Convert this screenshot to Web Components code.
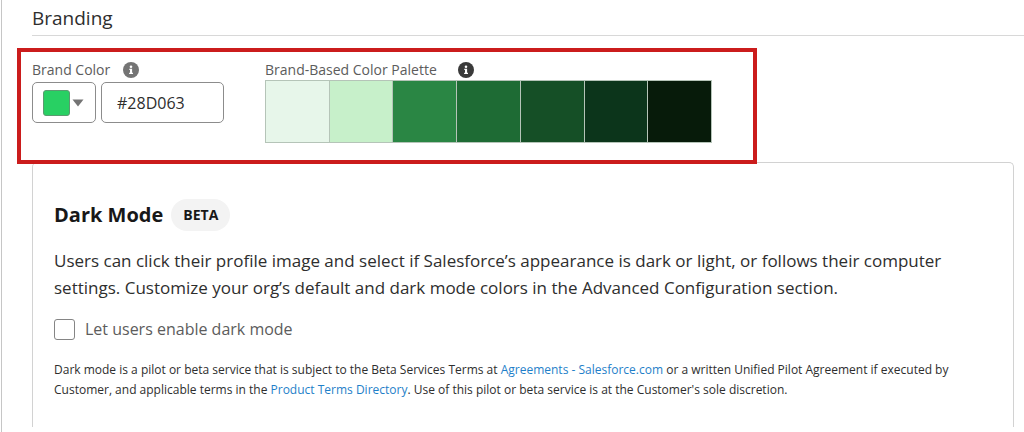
<!DOCTYPE html>
<html lang="en">
<head>
<meta charset="utf-8">
<meta name="viewport" content="width=device-width, initial-scale=1">
<title>Branding</title>
<style>
  body { margin: 0; background: #fff; color: #2e2e2e; font-family: "Open Sans", "Noto Sans", sans-serif; }
</style>
</head>
<body>
<settings-page></settings-page>

<template id="settings-page">
  <style>
    :host { display: block; box-sizing: border-box; min-height: 100vh; margin-left: 1px; border-left: 1px solid #c6c6c6; padding: 0 0 5px 30px; }
    h1 { margin: 0; padding: 5px 0 3px; border-bottom: 1px solid #d8d8d8; font-size: 19px; line-height: 27px; font-weight: 400; }
    highlight-box { margin: 12px 0 -2px -15px; }
    dark-mode-card { margin-right: 10px; }
  </style>
  <h1>Branding</h1>
  <highlight-box>
    <brand-color></brand-color>
    <color-palette colors="#e7f6ea #c7f0ca #2a8644 #1e6b34 #154f26 #0c351b #071b0a"></color-palette>
  </highlight-box>
  <dark-mode-card></dark-mode-card>
</template>

<template id="highlight-box">
  <style>
    :host { display: flex; align-items: flex-start; gap: 41px; position: relative; z-index: 1; box-sizing: border-box; width: fit-content; border: 4px solid #cb1c1c; padding: 8px 41px 17px 11px; }
  </style>
  <slot></slot>
</template>

<template id="info-icon">
  <style>
    :host { display: block; width: 16px; height: 16px; color: #747474; }
    svg { display: block; }
  </style>
  <svg width="16" height="16" viewBox="0 0 16 16" aria-hidden="true">
    <circle cx="8" cy="8" r="8" fill="currentColor"/>
    <circle cx="8" cy="4.7" r="1.3" fill="#fff"/>
    <path d="M6.3 6.8h2.8v3.9h.9v1.2H6.1v-1.2H7V8h-.7z" fill="#fff"/>
  </svg>
</template>

<template id="brand-color">
  <style>
    :host { display: block; }
    .head { display: flex; align-items: center; gap: 13px; height: 20px; }
    label { font-size: 14px; line-height: 20px; color: #5c5c5c; }
    .controls { display: flex; gap: 5px; margin-top: 2px; }
    button, input { box-sizing: border-box; height: 41px; border: 1px solid #8c8c8c; border-radius: 5px; background: #fff; }
    button { display: flex; align-items: center; gap: 2px; width: 64px; padding: 0 10px; }
    .chip { box-sizing: border-box; width: 27px; height: 26px; border: 1px solid #5b9a70; border-radius: 3px; background: #28d063; }
    input { width: 123px; padding: 0 15px; font: 16px "Open Sans", "Noto Sans", sans-serif; color: #2e2e2e; }
  </style>
  <div class="head"><label for="hex">Brand Color</label><info-icon></info-icon></div>
  <div class="controls">
    <button type="button" aria-label="Choose brand color">
      <span class="chip"></span>
      <svg width="12" height="8" viewBox="0 0 12 8" aria-hidden="true"><path d="M.5.5h11L6 7.5z" fill="#747474"/></svg>
    </button>
    <input id="hex" type="text" value="#28D063">
  </div>
</template>

<template id="color-palette">
  <style>
    :host { display: block; }
    .head { display: flex; align-items: center; gap: 21px; height: 20px; font-size: 14px; line-height: 20px; color: #5c5c5c; }
    info-icon { color: #3a3a3a; }
    .swatches { display: flex; box-sizing: border-box; width: 447px; border: 1px solid #b5c4b8; }
    .swatches span { flex: 1; height: 61px; }
    .swatches span + span { border-left: 1px solid #b5c4b8; }
  </style>
  <div class="head"><span>Brand-Based Color Palette</span><info-icon></info-icon></div>
  <div class="swatches"></div>
</template>

<template id="dark-mode-card">
  <style>
    :host { display: block; border: 1px solid #d2d2d2; border-bottom: 0; border-radius: 5px 5px 0 0; padding: 36px 50px 27px 21px; }
    header { display: flex; align-items: center; gap: 8px; }
    h2 { margin: 0; font-size: 20px; line-height: 32px; font-weight: 700; color: #181818; }
    .badge { border-radius: 16px; padding: 0 12px; background: #f3f3f3; font-size: 14px; line-height: 32px; font-weight: 700; color: #181818; }
    p { margin: 0; }
    .intro { margin-top: 16px; font-size: 17px; line-height: 27px; }
    .option { display: flex; align-items: center; gap: 10px; margin-top: 16px; }
    .option label { font-size: 16px; line-height: 24px; color: #5c5c5c; }
    input { appearance: none; box-sizing: border-box; width: 21px; height: 21px; margin: 0; border: 1px solid #858585; border-radius: 3px; background: #fff; }
    .legal { margin-top: 19px; font-size: 12px; line-height: 20px; }
    a { color: #1f7fc9; text-decoration: none; }
  </style>
  <header><h2>Dark Mode</h2><span class="badge">BETA</span></header>
  <p class="intro">Users can click their profile image and select if Salesforce’s appearance is dark or light, or follows their computer settings. Customize your org’s default and dark mode colors in the Advanced Configuration section.</p>
  <div class="option"><input id="enable" type="checkbox"><label for="enable">Let users enable dark mode</label></div>
  <p class="legal">Dark mode is a pilot or beta service that is subject to the Beta Services Terms at <a href="#agreements">Agreements - Salesforce.com</a> or a written Unified Pilot Agreement if executed by Customer, and applicable terms in the <a href="#directory">Product Terms Directory</a>. Use of this pilot or beta service is at the Customer's sole discretion.</p>
</template>

<script>
  class TemplateElement extends HTMLElement {
    constructor() {
      super();
      const template = document.getElementById(this.localName);
      this.attachShadow({ mode: "open" }).append(template.content.cloneNode(true));
    }
  }
  class InfoIcon extends TemplateElement {}
  class BrandColor extends TemplateElement {}
  class ColorPalette extends TemplateElement {
    connectedCallback() {
      const colors = this.getAttribute("colors").split(" ");
      this.shadowRoot.querySelector(".swatches").replaceChildren(...colors.map((color) => {
        const swatch = document.createElement("span");
        swatch.style.background = color;
        return swatch;
      }));
    }
  }
  class HighlightBox extends TemplateElement {}
  class DarkModeCard extends TemplateElement {}
  class SettingsPage extends TemplateElement {}

  customElements.define("info-icon", InfoIcon);
  customElements.define("brand-color", BrandColor);
  customElements.define("color-palette", ColorPalette);
  customElements.define("highlight-box", HighlightBox);
  customElements.define("dark-mode-card", DarkModeCard);
  customElements.define("settings-page", SettingsPage);
</script>
</body>
</html>
